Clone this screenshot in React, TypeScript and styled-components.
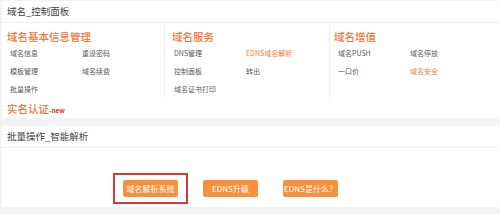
import React from 'react';
import styled, { createGlobalStyle } from 'styled-components';

const GlobalStyle = createGlobalStyle`
  html, body {
    margin: 0;
    padding: 0;
    background: #f3f3f3;
    font-family: "Noto Sans CJK SC", "Noto Sans", "Liberation Sans", sans-serif;
  }
`;

const Page = styled.div`
  width: 498px;
  height: 214px;
  padding: 1px 0 0 2px;
  overflow: hidden;
`;

const Panel = styled.section<{ gap?: number }>`
  background: #fff;
  margin-bottom: ${(props) => props.gap || 0}px;
`;

const PanelTitle = styled.div`
  height: 21px;
  line-height: 21px;
  padding-left: 5px;
  font-size: 9.5px;
  color: #444;
  border-bottom: 1px solid #efefef;
`;

const Columns = styled.div`
  display: grid;
  grid-template-columns: 162px 165px 1fr;
  margin-top: 2px;
`;

const Column = styled.div<{ divider?: boolean; inset: number }>`
  padding: 4px 0 0 ${(props) => props.inset}px;
  border-left: ${(props) => (props.divider ? '1px solid #f0f0f0' : 'none')};
  height: 69px;
`;

const Heading = styled.h3`
  margin: 0;
  height: 15px;
  line-height: 15px;
  font-size: 10.5px;
  font-weight: 500;
  color: #f4763b;
`;

const Items = styled.div<{ shift: number }>`
  display: grid;
  grid-template-columns: 72px 1fr;
  grid-auto-rows: 18px;
  padding-left: ${(props) => props.shift}px;
`;

const Item = styled.a<{ hot?: boolean }>`
  font-size: 7px;
  line-height: 18px;
  color: ${(props) => (props.hot ? '#f07b3f' : '#5a5a5a')};
  text-decoration: none;
  white-space: nowrap;
`;

const RealName = styled.div`
  margin-top: 3px;
  padding: 0 0 2px 5px;
  height: 15px;
  line-height: 15px;
  font-size: 10.5px;
  font-weight: 500;
  color: #f4763b;
`;

const New = styled.span`
  font-size: 6.5px;
  font-weight: 700;
  color: #e8322f;
`;

const ButtonRow = styled.div`
  display: flex;
  align-items: center;
  padding: 25px 0 3px 111px;
`;

const Highlight = styled.div`
  border: 2px solid #d9363e;
  padding: 5px 8px;
  display: flex;
`;

const Button = styled.button<{ offset?: number }>`
  width: 55px;
  height: 17px;
  margin-left: ${(props) => props.offset || 0}px;
  padding: 0;
  border: none;
  border-radius: 2px;
  background: #f7913d;
  color: #fff;
  font-family: inherit;
  font-size: 8px;
  line-height: 17px;
  text-align: center;
  white-space: nowrap;
`;

type Col = {
  title: string;
  inset: number;
  shift: number;
  divider?: boolean;
  items: { label: string; hot?: boolean }[];
};

const columns: Col[] = [
  {
    title: '域名基本信息管理',
    inset: 5,
    shift: 3,
    items: [
      { label: '域名信息' },
      { label: '重设密码' },
      { label: '模板管理' },
      { label: '域名续费' },
      { label: '批量操作' },
    ],
  },
  {
    title: '域名服务',
    inset: 7,
    shift: 2,
    divider: true,
    items: [
      { label: 'DNS管理' },
      { label: 'EDNS域名解析', hot: true },
      { label: '控制面板' },
      { label: '转出' },
      { label: '域名证书打印' },
    ],
  },
  {
    title: '域名增值',
    inset: 4,
    shift: 4,
    divider: true,
    items: [
      { label: '域名PUSH' },
      { label: '域名停放' },
      { label: '一口价' },
      { label: '域名安全', hot: true },
    ],
  },
];

export default function App() {
  return (
    <>
      <GlobalStyle />
      <Page>
        <Panel gap={8}>
          <PanelTitle>域名_控制面板</PanelTitle>
          <Columns>
            {columns.map((col) => (
              <Column key={col.title} divider={col.divider} inset={col.inset}>
                <Heading>{col.title}</Heading>
                <Items shift={col.shift}>
                  {col.items.map((it) => (
                    <Item key={it.label} hot={it.hot}>
                      {it.label}
                    </Item>
                  ))}
                </Items>
              </Column>
            ))}
          </Columns>
          <RealName>
            实名认证<New>-new</New>
          </RealName>
        </Panel>
        <Panel>
          <PanelTitle>批量操作_智能解析</PanelTitle>
          <ButtonRow>
            <Highlight>
              <Button>域名解析系统</Button>
            </Highlight>
            <Button offset={15}>EDNS升级</Button>
            <Button offset={25}>EDNS是什么？</Button>
          </ButtonRow>
        </Panel>
      </Page>
    </>
  );
}
